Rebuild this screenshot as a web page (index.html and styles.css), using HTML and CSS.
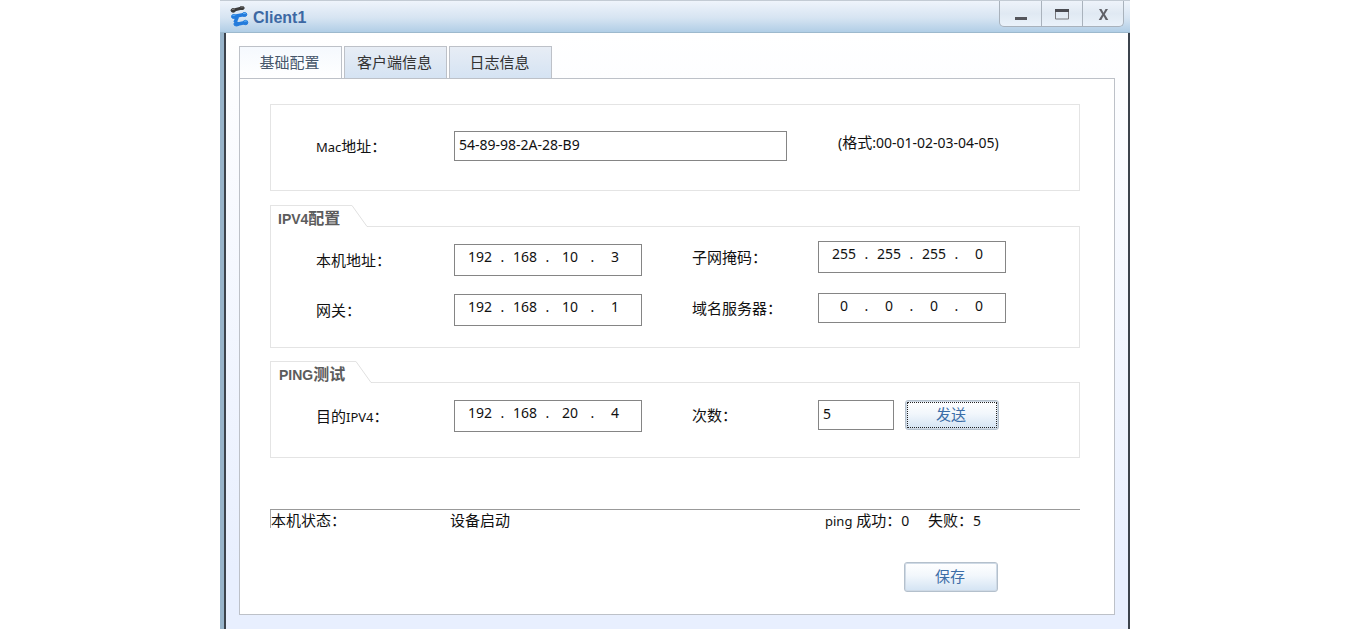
FILE: index.html
```html
<!DOCTYPE html>
<html lang="zh-CN">
<head>
<meta charset="utf-8">
<meta name="viewport" content="width=device-width, initial-scale=1">
<title>Client1</title>
<link rel="stylesheet" href="styles.css">
</head>
<body>
<div class="window">
  <header class="titlebar">
    <svg class="logo" viewBox="0 0 20 22" aria-hidden="true">
      <g fill="#3a3a3a" stroke="#3a3a3a">
        <path d="M4 5.200L13 3" fill="none" stroke-width="3"/>
        <ellipse cx="4.200" cy="5.400" rx="2.200" ry="1.800"/>
        <ellipse cx="13" cy="3" rx="2.200" ry="1.600"/>
      </g>
      <path d="M3.500 4.500l2-.5M12 2l2-.2" stroke="#8a8a8a" stroke-linecap="round"/>
      <g fill="#237bdc" stroke="#237bdc">
        <path d="M4.500 11.500L15.500 9.500M8.500 11.500L6 17.500M8 19.300L16.500 17.500" fill="none" stroke-width="3.500"/>
        <ellipse cx="4.800" cy="11.500" rx="2.300" ry="2"/>
        <ellipse cx="15.500" cy="9.500" rx="2.300" ry="2"/>
        <ellipse cx="7.500" cy="19" rx="2.600" ry="2"/>
        <ellipse cx="16.500" cy="17.500" rx="2.300" ry="2.200"/>
      </g>
      <path d="M4 10.500l2-.4M14.500 8.500l2-.2M15.500 16.200l2-.2" stroke="#62b4f5" stroke-linecap="round"/>
    </svg>
    <h1 class="title">Client1</h1>
    <div class="controls">
      <button class="control" type="button" aria-label="最小化"><svg width="14" height="14" viewBox="0 0 14 14"><path d="M1 10h12v3H1z" fill="#55565c"/></svg></button>
      <button class="control" type="button" aria-label="最大化"><svg width="14" height="14" viewBox="0 0 14 14"><path d="M.5 2.500h13v9.500H.5z" fill="none" stroke="#77787d"/><path d="M0 2h14v3H0z" fill="#4a4b52"/></svg></button>
      <button class="control" type="button" aria-label="关闭"><svg width="14" height="14" viewBox="0 0 14 14"><path d="M3 2h2.500l2 3.700L9.500 2H12L8.800 7.300 12.300 13H9.700L7.500 9.100 5.300 13H2.700l3.500-5.700z" fill="#606168"/></svg></button>
    </div>
  </header>

  <main class="content">
    <div class="tabs" role="tablist">
      <button class="tab active" type="button" role="tab" aria-selected="true">基础配置</button>
      <button class="tab" type="button" role="tab" aria-selected="false">客户端信息</button>
      <button class="tab" type="button" role="tab" aria-selected="false">日志信息</button>
    </div>

    <form class="panel">
      <section class="group mac-group">
        <label class="label" for="mac"><span class="latin">Mac</span>地址：</label>
        <input class="field mac" id="mac" type="text" value="54-89-98-2A-28-B9">
        <span class="hint">(<span class="cjk">格式</span>:00-01-02-03-04-05)</span>
      </section>

      <section>
        <div class="group-head">
          <h2 class="legend"><span class="legend-latin">IPV4</span>配置</h2>
          <svg class="slope" width="16" height="22" viewBox="0 0 16 22" aria-hidden="true"><path d="M0 .5L15 21.500H16" fill="none" stroke="#e0e0e0"/></svg>
          <span class="rule"></span>
        </div>
        <div class="group headed ipv4">
          <div class="column left">
            <div class="row">
              <label class="label" for="host">本机地址：</label>
              <div class="ip"><input id="host" value="192"><i>.</i><input aria-label="本机地址 2" value="168"><i>.</i><input aria-label="本机地址 3" value="10"><i>.</i><input aria-label="本机地址 4" value="3"></div>
            </div>
            <div class="row">
              <label class="label" for="gateway">网关：</label>
              <div class="ip"><input id="gateway" value="192"><i>.</i><input aria-label="网关 2" value="168"><i>.</i><input aria-label="网关 3" value="10"><i>.</i><input aria-label="网关 4" value="1"></div>
            </div>
          </div>
          <div class="column right">
            <div class="row">
              <label class="label" for="mask">子网掩码：</label>
              <div class="ip"><input id="mask" value="255"><i>.</i><input aria-label="子网掩码 2" value="255"><i>.</i><input aria-label="子网掩码 3" value="255"><i>.</i><input aria-label="子网掩码 4" value="0"></div>
            </div>
            <div class="row">
              <label class="label" for="dns">域名服务器：</label>
              <div class="ip short"><input id="dns" value="0"><i>.</i><input aria-label="域名服务器 2" value="0"><i>.</i><input aria-label="域名服务器 3" value="0"><i>.</i><input aria-label="域名服务器 4" value="0"></div>
            </div>
          </div>
        </div>
      </section>

      <section>
        <div class="group-head">
          <h2 class="legend wide"><span class="legend-latin">PING</span>测试</h2>
          <svg class="slope" width="16" height="22" viewBox="0 0 16 22" aria-hidden="true"><path d="M0 .5L15 21.500H16" fill="none" stroke="#e0e0e0"/></svg>
          <span class="rule"></span>
        </div>
        <div class="group headed ping">
          <div class="column left">
            <div class="row">
              <label class="label" for="target">目的<span class="latin">IPV4</span>：</label>
              <div class="ip"><input id="target" value="192"><i>.</i><input aria-label="目的IPV4 2" value="168"><i>.</i><input aria-label="目的IPV4 3" value="20"><i>.</i><input aria-label="目的IPV4 4" value="4"></div>
            </div>
          </div>
          <div class="column right">
            <div class="row">
              <label class="label" for="count">次数：</label>
              <input class="field count" id="count" type="text" value="5">
              <button class="button focused" type="button">发送</button>
            </div>
          </div>
        </div>
      </section>

      <div class="status">
        <span class="status-name">本机状态：</span>
        <span class="status-value">设备启动</span>
        <span class="status-success"><span class="latin">ping</span> 成功：<span class="number">0</span></span>
        <span>失败：<span class="number">5</span></span>
      </div>
      <div class="actions"><button class="button" type="button">保存</button></div>
    </form>
  </main>
</div>
</body>
</html>
```
FILE: styles.css
```css
* { box-sizing: border-box; }

body {
  margin: 0;
  background: #fff;
  color: #111;
  font: 15px/22px "Noto Sans", "Noto Sans CJK SC", sans-serif;
}

button, input { font: inherit; color: inherit; }

.window {
  max-width: 910px;
  min-height: 100vh;
  margin: 0 auto;
  display: flex;
  flex-direction: column;
}

.titlebar {
  height: 33px;
  display: flex;
  align-items: flex-start;
  padding: 0 6px 0 9px;
  border-top: 1px solid #c3cbd4;
  border-bottom: 1px solid #9db9cd;
  background: linear-gradient(#eff4fb, #d6e4f2 55%, #b1cee6);
}

.logo { width: 20px; height: 22px; margin-top: 4px; }

.title {
  margin: 6px 0 0 4px;
  color: #3c68a3;
  font: bold 16px/22px "Liberation Sans", Arial, sans-serif;
}

.controls {
  display: flex;
  margin-left: auto;
  height: 26px;
  border: 1px solid #a9b2bc;
  border-top: 0;
  border-radius: 0 0 5px 5px;
  background: linear-gradient(#eef3fa, #e0e9f3 50%, #eaf2fa);
}

.control {
  width: 41px;
  display: grid;
  place-items: center;
  padding: 0;
  border: 0;
  background: none;
}

.control + .control { border-left: 1px solid #a9b2bc; }

.content {
  flex: 1;
  padding: 13px 13px 13px 14px;
  border-left: 4px solid #98b4ca;
  border-right: 2px solid #3c434c;
  box-shadow: inset 2px 0 #3c434c;
  background: linear-gradient(#fff, #e8effe 90%);
}

.tabs { display: flex; gap: 2px; padding-left: 1px; }

.tab {
  width: 103px;
  height: 32px;
  padding: 0 2px 2px 0;
  border: 1px solid #bdc1c8;
  border-bottom: 0;
  background: linear-gradient(#e7edf5, #d5e3f3);
  color: #333;
}

.tab.active { background: linear-gradient(#f5f9fe, #fff); color: #46566a; }

.panel {
  margin-left: 1px;
  padding: 25px 34px 22px 30px;
  border: 1px solid #bdc1c8;
  background: #fff;
}

.group {
  display: flex;
  border: 1px solid #e4e4e4;
  padding-left: 45px;
}

.mac-group { height: 87px; padding-bottom: 3px; align-items: center; margin-bottom: 14px; }

.label { width: 138px; white-space: nowrap; }
.latin { font-size: 13px; }
.number { font-size: 14px; }
.cjk { font-size: 15px; }

.field, .ip {
  height: 32px;
  border: 1px solid #858585;
  background: #fff;
  font-size: 14px;
}

.field { height: 30px; padding: 0 4px 4px; border-radius: 0; }
.mac { width: 333px; }
.count { width: 76px; }
.hint { margin-left: 51px; padding-bottom: 7px; font-size: 14px; white-space: nowrap; }

.ip { width: 188px; display: flex; padding-left: 9px; line-height: 24px; }
.ip.short { height: 30px; }
.ip input {
  width: 32px;
  height: 24px;
  padding: 0;
  border: 0;
  background: none;
  text-align: center;
}
.ip i { width: 13px; font-style: normal; text-align: center; }

.group-head { display: flex; height: 21px; }

.legend {
  width: 82px;
  margin: 0;
  padding-left: 7px;
  border-top: 1px solid #e4e4e4;
  border-left: 1px solid #e4e4e4;
  color: #5c5c5c;
  font: bold 16px/26px "Liberation Sans", "Noto Sans CJK SC", sans-serif;
  white-space: nowrap;
}

.legend.wide { width: 86px; padding-left: 8px; }
.legend-latin { font-size: 14px; }
.slope { flex: none; }
.rule { flex: 1; height: 22px; border-bottom: 1px solid #e4e4e4; }

.headed { border-top: 0; }
.column { display: flex; flex-direction: column; }
.row { display: flex; align-items: center; }
.left { width: 376px; }
.right .label { width: 126px; }

.ipv4 { height: 122px; margin-bottom: 13px; }
.ipv4 .left { padding-top: 18px; gap: 18px; }
.ipv4 .right { padding-top: 15px; gap: 20px; }
.ping { height: 76px; padding-top: 18px; }

.button {
  width: 94px;
  height: 30px;
  padding: 0 2px 2px 0;
  border: 1px solid #b4c0cc;
  border-radius: 3px;
  box-shadow: inset 0 0 0 1px #cfdae6;
  background: linear-gradient(#fff, #f2f7fc 45%, #d3e3f3);
  color: #3c6ea8;
}

.button.focused { outline: 1px dotted #222; outline-offset: -3px; }
.row .button { margin-left: 11px; }

.status {
  display: flex;
  margin-top: 51px;
  border-top: 1px solid #999;
  line-height: 20px;
  white-space: nowrap;
}

.status-name { width: 180px; border-left: 1px solid #aaa; height: 18px; }
.status-value { width: 375px; }
.status-success { width: 103px; }

.actions { display: flex; justify-content: flex-end; margin-top: 31px; padding-right: 82px; }
```
